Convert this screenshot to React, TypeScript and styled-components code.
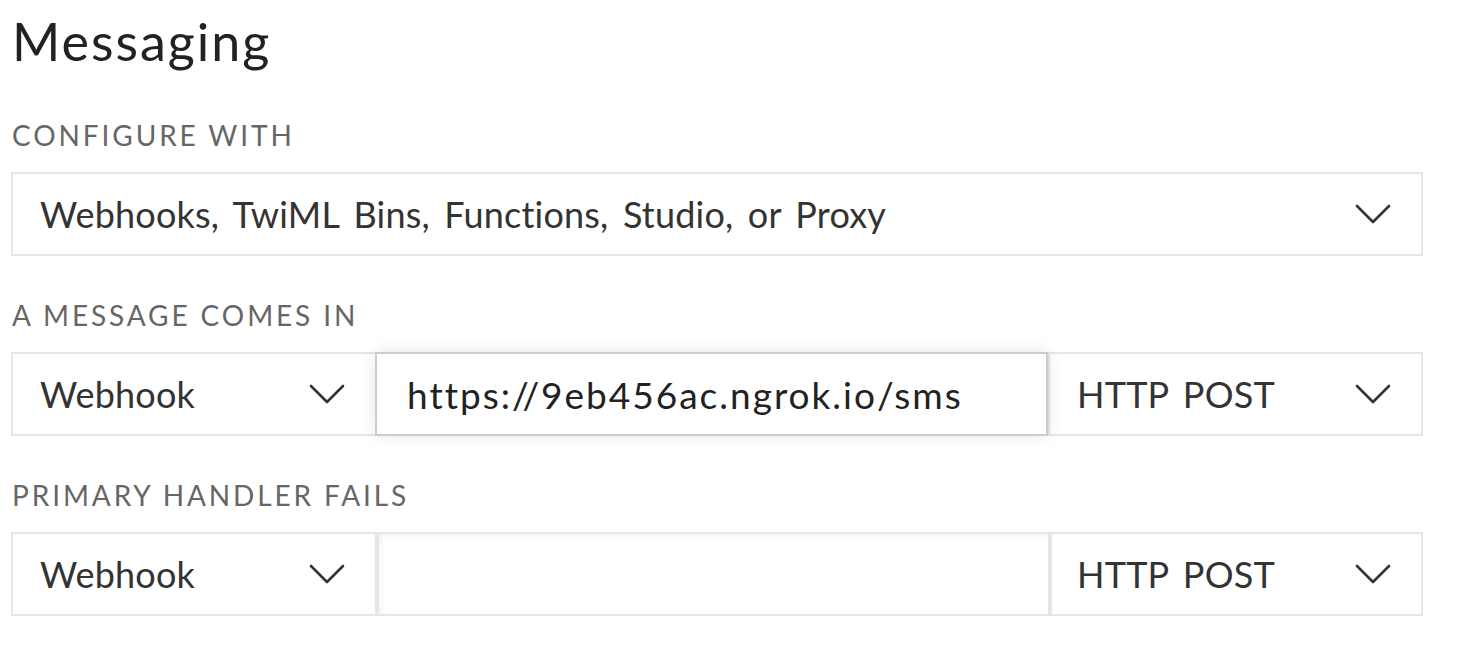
import styled, { createGlobalStyle } from "styled-components";

const GlobalStyle = createGlobalStyle`
    body {
        margin: 0;
        background: #ffffff;
        font-family: "Lato", "Noto Sans", sans-serif;
        color: #333333;
    }
`;

const Chevron = () => (
    <svg width="36" height="20" viewBox="0 0 36 20" fill="none">
        <polyline
            points="2,2 18,18 34,2"
            stroke="#333333"
            strokeWidth="2.6"
            strokeLinecap="round"
            strokeLinejoin="round"
        />
    </svg>
);

interface selectParams {
    value: string;
    width?: number;
}

const Select = ({ value, width }: selectParams) => {
    return (
        <SelectBox $width={width}>
            <SelectValue>{value}</SelectValue>
            <Chevron />
        </SelectBox>
    );
};

export default function App() {
    return (
        <>
            <GlobalStyle />
            <Page>
                <Title>Messaging</Title>

                <Field>
                    <Label>Configure with</Label>
                    <Row>
                        <Select value="Webhooks, TwiML Bins, Functions, Studio, or Proxy" />
                    </Row>
                </Field>

                <Field>
                    <Label>A message comes in</Label>
                    <Row>
                        <Select value="Webhook" width={366} />
                        <UrlInput $focused defaultValue="https://9eb456ac.ngrok.io/sms" />
                        <Select value="HTTP POST" width={375} />
                    </Row>
                </Field>

                <Field>
                    <Label>Primary handler fails</Label>
                    <Row>
                        <Select value="Webhook" width={366} />
                        <UrlInput defaultValue="" />
                        <Select value="HTTP POST" width={375} />
                    </Row>
                </Field>
            </Page>
        </>
    );
}

const Page = styled.div`
    width: 1412px;
    padding: 6px 0 0 11px;
    display: flex;
    flex-direction: column;
`;

const Title = styled.h1`
    margin: 0 0 0 1px;
    font-size: 52px;
    font-weight: 400;
    line-height: 70px;
    letter-spacing: 2px;
    color: #222222;
`;

const Field = styled.div`
    display: flex;
    flex-direction: column;
    margin-top: 43px;

    &:first-of-type {
        margin-top: 43px;
    }
`;

const Label = styled.div`
    margin: 0 0 21px 1px;
    font-size: 28px;
    line-height: 32px;
    letter-spacing: 2.9px;
    text-transform: uppercase;
    color: #666666;
`;

const Row = styled.div`
    display: flex;
    height: 84px;
`;

const SelectBox = styled.div<{ $width?: number }>`
    box-sizing: border-box;
    display: flex;
    align-items: center;
    justify-content: space-between;
    flex: ${(p) => (p.$width ? `0 0 ${p.$width}px` : "1 1 auto")};
    height: 100%;
    padding: 0 30px 0 27px;
    border: 2px solid #e6e6e6;
    background: #ffffff;

    & + input {
        margin-left: -2px;
    }
`;

const SelectValue = styled.span`
    font-size: 36px;
    word-spacing: 5px;
    letter-spacing: 0.2px;
    color: #333333;
    white-space: nowrap;
`;

const UrlInput = styled.input<{ $focused?: boolean }>`
    box-sizing: border-box;
    flex: 1 1 auto;
    min-width: 0;
    height: 100%;
    margin: 0;
    padding: 0 30px;
    font-family: "Lato", "Noto Sans", sans-serif;
    font-size: 37px;
    letter-spacing: 2px;
    color: #222222;
    outline: none;
    position: relative;
    z-index: 1;
    border: 2px solid ${(p) => (p.$focused ? "#cccccc" : "#e6e6e6")};
    border-left-width: ${(p) => (p.$focused ? "2px" : "4px")};
    background: #ffffff;
    box-shadow: ${(p) =>
        p.$focused
            ? "0 0 14px rgba(0, 0, 0, 0.1)"
            : "inset 6px 6px 10px -6px rgba(0, 0, 0, 0.07)"};

    & + div {
        margin-left: ${(p) => (p.$focused ? "0" : "-2px")};
        border-left-width: ${(p) => (p.$focused ? "2px" : "4px")};
        padding-left: ${(p) => (p.$focused ? "27px" : "25px")};
    }
`;
